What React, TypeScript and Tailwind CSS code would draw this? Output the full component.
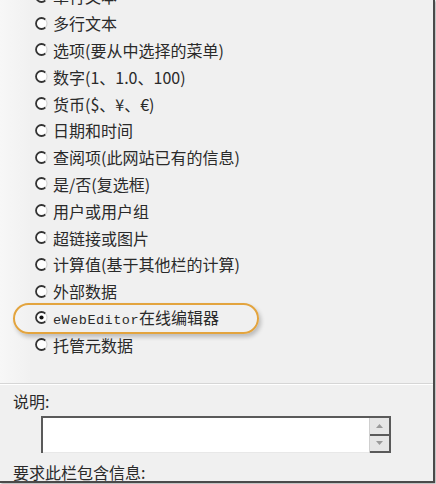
const options = [
  '单行文本',
  '多行文本',
  '选项(要从中选择的菜单)',
  '数字(1、1.0、100)',
  '货币($、¥、€)',
  '日期和时间',
  '查阅项(此网站已有的信息)',
  '是/否(复选框)',
  '用户或用户组',
  '超链接或图片',
  '计算值(基于其他栏的计算)',
  '外部数据',
  'EDITOR',
  '托管元数据',
];

const cjk = { fontFamily: '"Noto Sans CJK SC", sans-serif' };

const Radio = ({ checked }: { checked?: boolean }) => (
  <svg width="13" height="13" viewBox="0 0 13 13" className="shrink-0">
    <circle cx="6.5" cy="6.5" r="5.5" fill="#fff" />
    <path d="M10.4 2.6 A5.5 5.5 0 1 0 10.4 10.4" fill="none" stroke="#333" strokeWidth="1.8" />
    <path d="M10.4 2.6 A5.5 5.5 0 0 1 10.4 10.4" fill="none" stroke="#d4d4d4" strokeWidth="1.2" />
    {checked && <circle cx="6.5" cy="6.5" r="2.1" fill="#111" />}
  </svg>
);

const OptionRow = ({ label }: { label: string }) => {
  const isEditor = label === 'EDITOR';
  return (
    <div className="flex items-center h-[26.8px] pl-[35px]">
      <Radio checked={isEditor} />
      {isEditor ? (
        <span className="ml-[5px] text-[16px] text-[#2a2a2a] whitespace-nowrap leading-none">
          <span className="text-[13.5px] tracking-[0.5px]" style={{ fontFamily: '"Liberation Mono", monospace' }}>
            eWebEditor
          </span>
          <span style={cjk}>在线编辑器</span>
        </span>
      ) : (
        <span className="ml-[5px] text-[16px] text-[#2a2a2a] whitespace-nowrap leading-none" style={cjk}>
          {label}
        </span>
      )}
    </div>
  );
};

export default function App() {
  return (
    <div className="w-[436px] h-[484px] bg-white overflow-hidden">
      <div className="relative w-[435px] h-[483px] bg-[#f0f0f0] border-r-2 border-b-2 border-[#4a4a4a] shadow-[1px_1px_2px_rgba(0,0,0,0.35)] overflow-hidden">
        <div className="absolute left-0 top-0 w-[30px] h-[383px] bg-gradient-to-r from-[#f7f7f7] to-[#f1f1f1]" />
        <div className="relative mt-[-17px]">
          {options.map((o) => (
            <OptionRow key={o} label={o} />
          ))}
        </div>

        <div className="absolute left-[13px] top-[303px] w-[246px] h-[31px] rounded-full border-2 border-[#e3a43e] shadow-[2px_3px_4px_rgba(0,0,0,0.22)]" />

        <div className="relative mt-[25px] border-t border-[#d6d6d6]">
          <div className="border-t border-white" />
          <div className="pl-[13px] pt-[8px] text-[16px] text-[#2a2a2a] leading-none" style={cjk}>
            说明:
          </div>
          <div className="ml-[41px] mt-[7px] flex w-[350px] h-[37px] border-t-2 border-l-2 border-[#5a5a5a] bg-white">
            <div className="flex-1 border-b border-[#e8e8e8]" />
            <div className="w-[22px] flex flex-col border-l border-[#cfcfcf] border-r-2 border-r-[#5a5a5a]">
              <div className="flex-1 bg-[#e6e6e6] border-b-2 border-[#5a5a5a] flex items-center justify-center">
                <svg width="7" height="4" viewBox="0 0 7 4">
                  <path d="M0 4 L3.5 0 L7 4 Z" fill="#9a9a9a" />
                </svg>
              </div>
              <div className="flex-1 bg-[#e6e6e6] border-b-2 border-[#5a5a5a] flex items-center justify-center">
                <svg width="7" height="4" viewBox="0 0 7 4">
                  <path d="M0 0 L3.5 4 L7 0 Z" fill="#9a9a9a" />
                </svg>
              </div>
            </div>
          </div>
          <div className="pl-[13px] mt-[11px] text-[16px] text-[#2a2a2a] leading-none" style={cjk}>
            要求此栏包含信息:
          </div>
        </div>
      </div>
    </div>
  );
}
